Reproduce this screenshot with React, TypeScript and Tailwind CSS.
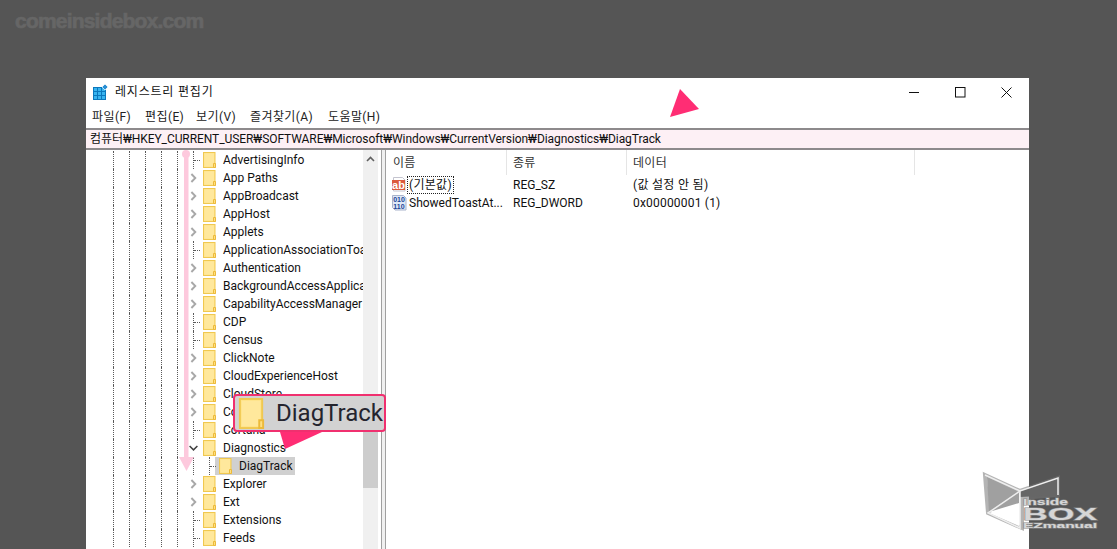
import React from "react";

const FONT = "font-['Roboto','Noto_Sans_CJK_KR',sans-serif]";

function Folder({ className = "" }: { className?: string }) {
  return (
    <svg viewBox="0 0 13 16" className={className}>
      <rect x="0.5" y="0.5" width="11.5" height="15" fill="#ffe48a" stroke="#f0c850" />
      <rect x="1.5" y="1.5" width="9.5" height="13" fill="#ffe89c" />
      <path d="M10.5 15.5v-4h2v4z" fill="#ffdf80" stroke="#ecba3a" />
    </svg>
  );
}

function Guide({ stub = false }: { stub?: boolean }) {
  return (
    <div className="relative flex h-[18px] w-4 shrink-0 justify-center">
      <div className="h-full border-l border-dotted border-[#5a5a5a]" />
      {stub && <div className="absolute left-[9px] top-[9px] w-[6px] border-t border-dotted border-[#5a5a5a]" />}
    </div>
  );
}

function Expander({ open }: { open?: boolean }) {
  return (
    <div className="flex h-[18px] w-4 shrink-0 items-center justify-center">
      <svg width="9" height="10" viewBox="0 0 9 10" fill="none">
        {open ? (
          <path d="M0.6 3 4.5 6.9 8.4 3" stroke="#404040" strokeWidth="1.5" />
        ) : (
          <path d="M2.4 1 6.3 5 2.4 9" stroke="#a8a8a8" strokeWidth="1.9" />
        )}
      </svg>
    </div>
  );
}

type Row = { name: string; kind: "leaf" | "closed" | "open" };
const rows: Row[] = [
  { name: "AdvertisingInfo", kind: "leaf" },
  { name: "App Paths", kind: "closed" },
  { name: "AppBroadcast", kind: "closed" },
  { name: "AppHost", kind: "closed" },
  { name: "Applets", kind: "closed" },
  { name: "ApplicationAssociationToasts", kind: "leaf" },
  { name: "Authentication", kind: "closed" },
  { name: "BackgroundAccessApplications", kind: "closed" },
  { name: "CapabilityAccessManager", kind: "closed" },
  { name: "CDP", kind: "leaf" },
  { name: "Census", kind: "leaf" },
  { name: "ClickNote", kind: "closed" },
  { name: "CloudExperienceHost", kind: "closed" },
  { name: "CloudStore", kind: "closed" },
  { name: "ContentDeliveryManager", kind: "closed" },
  { name: "Cortana", kind: "leaf" },
  { name: "Diagnostics", kind: "open" },
];
const after: Row[] = [
  { name: "Explorer", kind: "closed" },
  { name: "Ext", kind: "closed" },
  { name: "Extensions", kind: "leaf" },
  { name: "Feeds", kind: "leaf" },
];

function Guides() {
  return (
    <>
      <Guide />
      <Guide />
      <Guide />
      <Guide />
      <Guide />
    </>
  );
}

function TreeRow({ row }: { row: Row }) {
  return (
    <div className="flex h-[18px] items-center pl-[19px]">
      <Guides />
      {row.kind === "leaf" ? <Guide stub /> : <Expander open={row.kind === "open"} />}
      <Folder className="ml-[2px] h-4 w-[13px] shrink-0" />
      <span className="ml-[7px] whitespace-nowrap text-[12px] leading-[18px] text-[#111]">{row.name}</span>
    </div>
  );
}

function AbIcon() {
  return (
    <svg width="16" height="16" viewBox="0 0 16 16" className="shrink-0">
      <path d="M2.5 0.5h9l2.5 2.5v11h-11.5z" fill="#fff" stroke="#c4c4cf" />
      <rect x="1" y="3" width="13" height="10" fill="#dc5a3e" />
      <text x="7.5" y="11.5" textAnchor="middle" fontSize="11" fontWeight="700" fill="#fff" fontFamily="Liberation Sans">ab</text>
    </svg>
  );
}

function BinIcon() {
  return (
    <svg width="16" height="16" viewBox="0 0 16 16" className="shrink-0">
      <path d="M1.5 0.5h11l2.5 2.5v12h-11l-2.5-2.5z" fill="#dfe8f6" stroke="#aab4cc" />
      <text x="8" y="7" textAnchor="middle" fontSize="7" fontWeight="700" fill="#1a4596" fontFamily="Liberation Sans">010</text>
      <text x="8" y="14" textAnchor="middle" fontSize="7" fontWeight="700" fill="#1a4596" fontFamily="Liberation Sans">110</text>
    </svg>
  );
}

function AppIcon() {
  return (
    <svg width="15" height="16" viewBox="0 0 15 16" className="shrink-0">
      <rect x="0" y="3" width="13" height="13" fill="#0b78bd" />
      <g fill="#38b4ef">
        <rect x="1" y="4" width="3" height="3" />
        <rect x="5" y="4" width="3" height="3" />
        <rect x="9" y="4" width="3" height="3" />
        <rect x="1" y="8" width="3" height="3" />
        <rect x="5" y="8" width="3" height="3" />
        <rect x="9" y="8" width="3" height="3" />
        <rect x="1" y="12" width="3" height="3" />
        <rect x="5" y="12" width="3" height="3" />
        <rect x="9" y="12" width="3" height="3" />
      </g>
      <path d="M12 0 15 3 12 6 9 3z" fill="#2a8fd4" stroke="#fff" strokeWidth="0.7" />
    </svg>
  );
}

export default function App() {
  return (
    <div className={`relative h-[549px] w-[1117px] overflow-hidden bg-[#555555] pl-[86px] pt-[78px] ${FONT}`}>
      {/* watermark */}
      <div className="absolute left-[15px] top-[7px] font-['Liberation_Sans',sans-serif] text-[21px] font-bold leading-[28px] tracking-[-0.8px] text-[#666666] [-webkit-text-stroke:0.7px_#666666]">
        comeinsidebox.com
      </div>

      {/* window */}
      <div className="flex h-[471px] w-[943px] flex-col bg-white">
        <div className="flex h-[26px] shrink-0 items-center pl-[7px] pt-[2px]">
          <AppIcon />
          <span className="ml-[7px] text-[12px] tracking-[0.8px] text-[#111]">레지스트리 편집기</span>
          <div className="ml-auto flex items-center">
            <div className="flex w-[46px] justify-center">
              <svg width="11" height="11" viewBox="0 0 11 11"><path d="M0 5.5h10" stroke="#111" /></svg>
            </div>
            <div className="flex w-[46px] justify-center">
              <svg width="11" height="11" viewBox="0 0 11 11"><rect x="0.5" y="0.5" width="9.5" height="9.5" fill="none" stroke="#111" /></svg>
            </div>
            <div className="flex w-[46px] justify-center">
              <svg width="11" height="11" viewBox="0 0 11 11"><path d="M0.5 0.5l10 10M10.5 0.5l-10 10" stroke="#111" /></svg>
            </div>
          </div>
        </div>
        <div className="flex h-[24px] shrink-0 items-center pl-[6px] pt-[2px] text-[12px] tracking-[0.4px] text-[#222]">
          <span className="w-[53px]">파일(F)</span>
          <span className="w-[51px]">편집(E)</span>
          <span className="w-[54px]">보기(V)</span>
          <span className="w-[78px]">즐겨찾기(A)</span>
          <span>도움말(H)</span>
        </div>
        <div className="flex h-[22px] shrink-0 items-center border-y-2 border-y-[#8d8a8c] bg-[#fdf0f5] pl-[4px] text-[12px] tracking-[-0.07px] text-[#111]">
          컴퓨터₩HKEY_CURRENT_USER₩SOFTWARE₩Microsoft₩Windows₩CurrentVersion₩Diagnostics₩DiagTrack
        </div>

        <div className="flex min-h-0 flex-1">
          {/* tree */}
          <div className="flex w-[296px] shrink-0 border-r-[1px] border-[#a0a0a0]">
            <div className="w-[277px] shrink-0 overflow-hidden pt-[1px]">
              {rows.map((r) => (
                <TreeRow key={r.name} row={r} />
              ))}
              <div className="flex h-[18px] items-center pl-[19px]">
                <Guides />
                <Guide />
                <Guide stub />
                <div className="-ml-[2px] flex h-[18px] w-[80px] items-center bg-[#d0d0d0] pl-[4px]">
                  <Folder className="h-4 w-[13px] shrink-0" />
                  <span className="ml-[7px] whitespace-nowrap text-[12px] leading-[18px] text-[#111]">DiagTrack</span>
                </div>
              </div>
              {after.map((r) => (
                <TreeRow key={r.name} row={r} />
              ))}
            </div>
            <div className="flex w-[15px] shrink-0 flex-col bg-[#f0f0f0]">
              <div className="flex h-[18px] items-center justify-center">
                <svg width="9" height="6" viewBox="0 0 9 6" fill="none"><path d="M1 5l3.5-3.5L8 5" stroke="#606060" strokeWidth="1.6" /></svg>
              </div>
              <div className="mt-[263px] h-[57px] bg-[#cdcdcd]" />
            </div>
          </div>
          {/* splitter */}
          <div className="w-[4px] shrink-0 border-r border-[#a0a0a0] bg-[#f0f0f0]" />

          {/* list */}
          <div className="min-w-0 flex-1 text-[12px] text-[#111]">
            <div className="flex h-[26px] items-start tracking-[0.3px] text-[#333]">
              <div className="flex h-[25px] w-[121px] items-center border-r border-[#e5e5e5] pl-[7px]">이름</div>
              <div className="flex h-[25px] w-[120px] items-center border-r border-[#e5e5e5] pl-[6px]">종류</div>
              <div className="flex h-[25px] w-[288px] items-center border-r border-[#e5e5e5] pl-[6px]">데이터</div>
            </div>
            <div className="flex h-[18px] items-center">
              <div className="flex w-[121px] items-center pl-[5px]">
                <AbIcon />
                <span className="border border-dotted border-[#222] px-[1px] leading-[16px] tracking-[0.3px]">(기본값)</span>
              </div>
              <div className="w-[120px] pl-[6px]">REG_SZ</div>
              <div className="pl-[6px] tracking-[0.3px]">(값 설정 안 됨)</div>
            </div>
            <div className="flex h-[18px] items-center">
              <div className="flex w-[121px] items-center pl-[5px]">
                <BinIcon />
                <span className="ml-[2px]">ShowedToastAt...</span>
              </div>
              <div className="w-[120px] pl-[6px]">REG_DWORD</div>
              <div className="pl-[6px] tracking-[0.2px]">0x00000001 (1)</div>
            </div>
          </div>
        </div>
      </div>

      {/* pink annotation arrow */}
      <svg className="absolute left-[175px] top-[148px]" width="24" height="326" viewBox="0 0 24 326">
        <circle cx="11" cy="6" r="4" fill="#fdc9dd" />
        <rect x="9" y="6" width="4.5" height="304" fill="#fdc9dd" />
        <path d="M4 309h15l-7.5 14z" fill="#fdc9dd" />
      </svg>

      {/* pink triangle at the address bar */}
      <svg className="absolute left-[668px] top-[87px]" width="34" height="32" viewBox="0 0 34 32">
        <path d="M12 2 31 22 2 30z" fill="#ff2d74" />
      </svg>

      {/* magnified callout */}
      <div className="absolute left-[233px] top-[394px] flex h-[38px] w-[153px] items-center rounded-[4px] border-2 border-[#f0306f] bg-[#d2d2d2] pl-[3px]">
        <Folder className="h-[31px] w-[27px] shrink-0" />
        <span className="ml-[11px] whitespace-nowrap text-[24px] leading-none text-[#24242e]">DiagTrack</span>
      </div>
      <svg className="absolute left-[278px] top-[430px]" width="46" height="21" viewBox="0 0 46 21">
        <path d="M2 2H44L7 19z" fill="#ff2d74" />
      </svg>

      {/* logo */}
      <svg className="absolute left-[980px] top-[468px]" width="125" height="70" viewBox="0 0 125 70">
        <path d="M5 7 40 23 78 10V27L42 30V60L8 45z" fill="none" stroke="#777" strokeOpacity="0.55" strokeWidth="4" />
        <path d="M40 23 78 10V27L40 29z" fill="#666" />
        <path d="M7 9 39 24V35L9 44z" fill="#a0a0a0" />
        <path d="M9 45 39 36V58z" fill="#ffffff" />
        <path d="M5 7 40 23 78 10V27M40 23V60L8 45z" fill="none" stroke="#eeeeee" strokeWidth="1.5" />
        <g fontWeight="700" fill="#d6d6d6" fontFamily="Liberation Sans" stroke="#8a8a8a" strokeWidth="1" paintOrder="stroke">
          <text x="43" y="37" fontSize="9.5" textLength="45" lengthAdjust="spacingAndGlyphs">Inside</text>
          <text x="43" y="52" fontSize="17" textLength="74" lengthAdjust="spacingAndGlyphs">BOX</text>
          <text x="43" y="60" fontSize="8" textLength="74" lengthAdjust="spacingAndGlyphs">EZmanual</text>
        </g>
      </svg>
    </div>
  );
}
